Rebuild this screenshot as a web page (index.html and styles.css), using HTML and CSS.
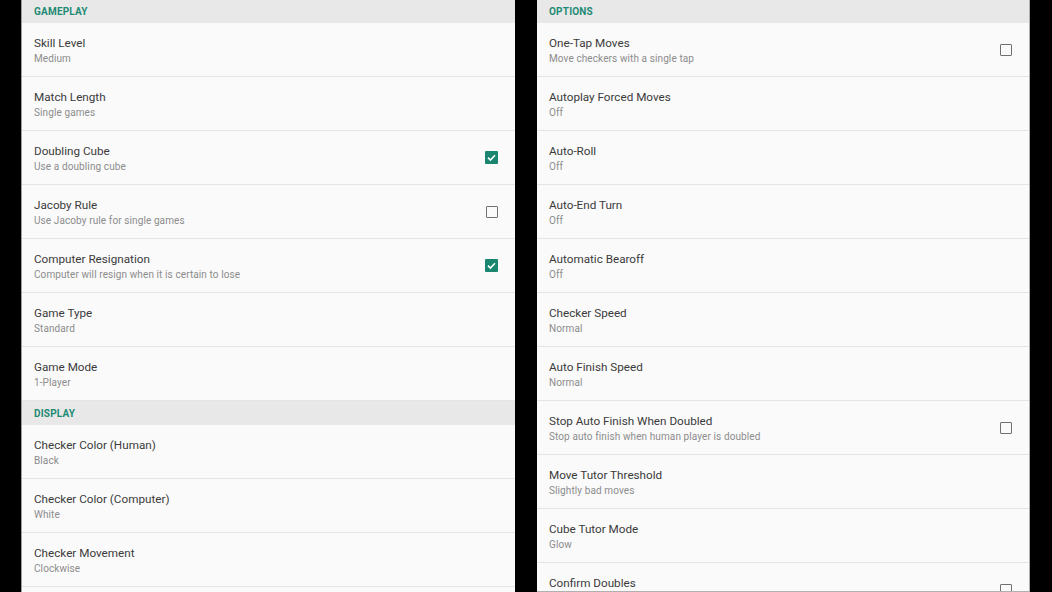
FILE: index.html
```html
<!DOCTYPE html>
<html lang="en">
<head>
<meta charset="UTF-8" />
<meta name="viewport" content="width=device-width, initial-scale=1.0"/>
<title>Settings</title>
<link rel="stylesheet" href="styles.css">
</head>
<body>
<div class="screen">
<div class="panel panel-left">
<div class="list">
<div class="category">Gameplay</div>
<div class="pref"><div class="text"><div class="title">Skill Level</div><div class="summary">Medium</div></div></div>
<div class="pref"><div class="text"><div class="title">Match Length</div><div class="summary">Single games</div></div></div>
<div class="pref"><div class="text"><div class="title">Doubling Cube</div><div class="summary">Use a doubling cube</div></div><span class="check on"><svg viewBox="0 0 13 13"><path d="M3 6.7 L5.4 9 L10 4.2"/></svg></span></div>
<div class="pref"><div class="text"><div class="title">Jacoby Rule</div><div class="summary">Use Jacoby rule for single games</div></div><span class="check"></span></div>
<div class="pref"><div class="text"><div class="title">Computer Resignation</div><div class="summary">Computer will resign when it is certain to lose</div></div><span class="check on"><svg viewBox="0 0 13 13"><path d="M3 6.7 L5.4 9 L10 4.2"/></svg></span></div>
<div class="pref"><div class="text"><div class="title">Game Type</div><div class="summary">Standard</div></div></div>
<div class="pref"><div class="text"><div class="title">Game Mode</div><div class="summary">1-Player</div></div></div>
<div class="category">Display</div>
<div class="pref"><div class="text"><div class="title">Checker Color (Human)</div><div class="summary">Black</div></div></div>
<div class="pref"><div class="text"><div class="title">Checker Color (Computer)</div><div class="summary">White</div></div></div>
<div class="pref"><div class="text"><div class="title">Checker Movement</div><div class="summary">Clockwise</div></div></div>
</div>
</div>
<div class="panel panel-right">
<div class="list">
<div class="category">Options</div>
<div class="pref"><div class="text"><div class="title">One-Tap Moves</div><div class="summary">Move checkers with a single tap</div></div><span class="check"></span></div>
<div class="pref"><div class="text"><div class="title">Autoplay Forced Moves</div><div class="summary">Off</div></div></div>
<div class="pref"><div class="text"><div class="title">Auto-Roll</div><div class="summary">Off</div></div></div>
<div class="pref"><div class="text"><div class="title">Auto-End Turn</div><div class="summary">Off</div></div></div>
<div class="pref"><div class="text"><div class="title">Automatic Bearoff</div><div class="summary">Off</div></div></div>
<div class="pref"><div class="text"><div class="title">Checker Speed</div><div class="summary">Normal</div></div></div>
<div class="pref"><div class="text"><div class="title">Auto Finish Speed</div><div class="summary">Normal</div></div></div>
<div class="pref"><div class="text"><div class="title">Stop Auto Finish When Doubled</div><div class="summary">Stop auto finish when human player is doubled</div></div><span class="check"></span></div>
<div class="pref"><div class="text"><div class="title">Move Tutor Threshold</div><div class="summary">Slightly bad moves</div></div></div>
<div class="pref"><div class="text"><div class="title">Cube Tutor Mode</div><div class="summary">Glow</div></div></div>
<div class="pref pref-last"><div class="text"><div class="title">Confirm Doubles</div></div><span class="check"></span></div>
</div>
</div>
</div>
</body>
</html>
```

FILE: styles.css
```css
html, body {
    margin: 0;
    height: 100%;
    background-color: #000;
    font-family: Roboto, "Liberation Sans", sans-serif;
}
.screen {
    display: flex;
    gap: 22px;
    padding-left: 22px;
    height: 592px;
    overflow: hidden;
}
.panel {
    width: 493px;
    height: 592px;
    overflow: hidden;
    background-color: #fafafa;
}
.panel-left {
    border-left: 1px solid #9e9e9e;
    margin-left: -1px;
}
.panel-right {
    width: 492px;
    border-right: 1px solid #b0b0b0;
    border-bottom: 1px solid #b0b0b0;
    height: 591px;
}
.list {
    margin-top: -1px;
}
.category {
    height: 24px;
    line-height: 25px;
    padding-left: 12px;
    background-color: #e8e8e8;
    color: #1f8a74;
    font-size: 10px;
    font-weight: bold;
    text-transform: uppercase;
    letter-spacing: 0.2px;
}
.pref {
    display: flex;
    align-items: center;
    height: 53px;
    border-bottom: 1px solid #e4e4e4;
    padding: 0 17px 0 12px;
}
.text {
    flex: 1;
    margin-top: 1px;
}
.title {
    font-size: 11.7px;
    line-height: 16px;
    color: #3a3a3a;
}
.summary {
    margin-top: 1px;
    font-size: 10px;
    line-height: 14px;
    color: #8c8c8c;
    letter-spacing: 0.1px;
}
.pref-last {
    align-items: flex-start;
}
.pref-last .text {
    margin-top: 12px;
}
.pref-last .check {
    margin-top: 21px;
}
.check {
    width: 10px;
    height: 10px;
    border: 1.5px solid #707070;
    border-radius: 1px;
}
.check.on {
    width: 13px;
    height: 13px;
    border: none;
    background-color: #1a8670;
}
.check svg {
    display: block;
    width: 13px;
    height: 13px;
    fill: none;
    stroke: #fff;
    stroke-width: 1.6;
}
```
